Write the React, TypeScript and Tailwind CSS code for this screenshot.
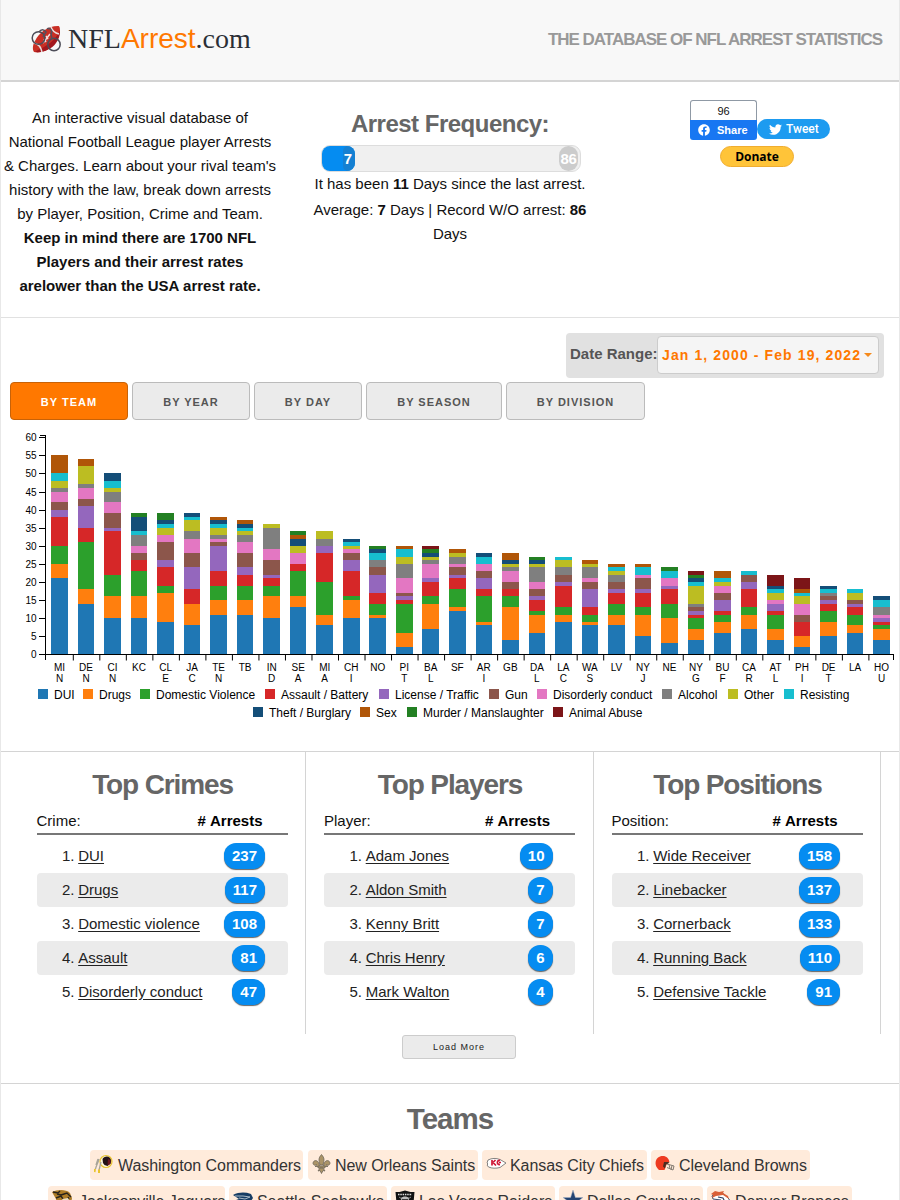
import React from "react";
import { FaFacebook, FaTwitter } from "react-icons/fa";

const COLORS: Record<string, string> = {
  D: "#1f77b4", R: "#ff7f0e", V: "#2ca02c", A: "#d62728", L: "#9467bd",
  G: "#8c564b", C: "#e377c2", H: "#7f7f7f", O: "#bcbd22", S: "#17becf",
  T: "#144e78", X: "#b05608", M: "#238023", N: "#7c1518",
};

// Each entry is a category code followed by the running total at its top edge.
const TEAMS: [string, string][] = [
  ["MI N", "D21 R25 V30 A38 L40 G42 C45 H46 O48 S50 X55"],
  ["DE N", "D14 R18 V31 A35 L41 G43 C46 H47 O52 X54"],
  ["CI N", "D10 R16 V22 A34 L35 G39 C42 H45 O46 S48 T50"],
  ["KC", "D10 R16 V23 A26 G28 C30 H33 S34 T38 M39"],
  ["CL E", "D9 R17 V19 A24 L26 G31 C33 O35 S36 T37 M39"],
  ["JA C", "D8 R14 A18 L24 G28 C32 H34 O37 S38 T39"],
  ["TE N", "D11 R15 V19 A23 L30 G31 C32 H33 O35 S36 T37 X38"],
  ["TB", "D11 R15 V19 A22 L24 G28 C31 H33 O34 S35 T36 X37"],
  ["IN D", "D10 R16 V19 A21 L22 G26 C29 H35 O36"],
  ["SE A", "D13 R16 V23 A25 C28 O30 T32 X33 M34"],
  ["MI A", "D8 R11 V20 A28 L30 H32 O34"],
  ["CH I", "D10 R15 V16 A23 L26 G28 C29 O30 S31 T32"],
  ["NO", "D10 R11 V14 A17 L22 G24 H26 S28 T29 M30"],
  ["PI T", "D2 R6 V14 A15 L16 G17 C21 H25 O27 S29 X30"],
  ["BA L", "D7 R14 V16 A20 L21 C25 H26 O27 T28 M29 N30"],
  ["SF", "D12 R13 V18 A21 L22 G24 C25 H27 O28 X29"],
  ["AR I", "D8 R9 V16 A18 L21 G23 C25 S27 T28"],
  ["GB", "D4 R13 V16 A18 G20 C23 H24 O25 T26 X28"],
  ["DA L", "D6 R11 V12 A15 L16 G18 C20 H24 O25 T26 M27"],
  ["LA C", "D9 R11 V13 A19 L20 G22 H24 O26 S27"],
  ["WA S", "D8 R9 V11 A13 L18 G20 C21 H24 O25 X26"],
  ["LV", "D8 R11 V14 A17 L18 G20 H22 O23 S24 X25"],
  ["NY J", "D5 R11 V13 A17 L18 G21 C22 S24 X25"],
  ["NE", "D3 R10 V14 A18 L19 C21 S23 M24"],
  ["NY G", "D4 R7 V10 A11 L12 G13 H14 O19 S20 T21 M22 N23"],
  ["BU F", "D6 R9 V11 A12 L15 G17 C19 O20 S21 X23"],
  ["CA R", "D7 R11 V13 A18 L20 G22 S23"],
  ["AT L", "D4 R7 V11 A12 L14 C15 O17 S18 T19 N22"],
  ["PH I", "D2 R5 A9 G11 C14 O16 S17 X18 N21"],
  ["DE T", "D5 R9 V12 A14 L15 G16 H17 S18 T19"],
  ["LA", "D6 R8 V11 A13 L14 G15 O17 S18"],
  ["HO U", "D4 R7 V8 A9 L10 C11 H13 S15 T16"],
];

const BASE = 229.3;
const UNIT = 3.617;
const STEP = 26.52;

function Chart() {
  return (
    <svg width="898" height="264" viewBox="1 0 898 264" className="block" fontFamily="'Liberation Sans', Arial, sans-serif" fontSize="10">
      {TEAMS.map(([name, data], i) => {
        let prev = 0;
        const x = 51.2 + STEP * i;
        const [a, b] = name.split(" ");
        return (
          <g key={i}>
            {data.split(" ").map((seg) => {
              const top = Number(seg.slice(1));
              const y1 = Math.round(BASE - top * UNIT);
              const y0 = Math.round(BASE - prev * UNIT);
              prev = top;
              return <rect key={seg} x={x} y={y1} width="16.6" height={y0 - y1} fill={COLORS[seg[0]]} shapeRendering="crispEdges" />;
            })}
            <text x={x + 8.3} y="246" textAnchor="middle">{a}</text>
            {b && <text x={x + 8.3} y="257" textAnchor="middle">{b}</text>}
          </g>
        );
      })}
      <path d="M39.500 10.500H45.500V229.500H893.500V235.500M45.500 229.500V235.500" transform="translate(0 -.5)" fill="none" stroke="#000" shapeRendering="crispEdges" />
      {Array.from({ length: 31 }, (_, i) => (
        <path key={i} d={`M${73.3 + STEP * i} 229.500v6`} stroke="#000" strokeWidth="1" />
      ))}
      {Array.from({ length: 13 }, (_, i) => {
        const y = Math.round(BASE - i * 5 * UNIT);
        return (
          <g key={i}>
            <path d={`M39 ${y + 0.5}h6`} stroke="#000" shapeRendering="crispEdges" />
            <text x="36.500" y={y + 4} textAnchor="end">{i * 5}</text>
          </g>
        );
      })}
    </svg>
  );
}

const LEGEND: [string, string, number][][] = [
  [["D", "DUI", 45], ["R", "Drugs", 57], ["V", "Domestic Violence", 125], ["A", "Assault / Battery", 114], ["L", "License / Traffic", 110], ["G", "Gun", 48], ["C", "Disorderly conduct", 125], ["H", "Alcohol", 66], ["O", "Other", 56], ["S", "Resisting", 66]],
  [["T", "Theft / Burglary", 107], ["X", "Sex", 47], ["M", "Murder / Manslaughter", 146], ["N", "Animal Abuse", 92]],
];

function Legend() {
  return (
    <div className="text-[12px] leading-[18px] text-black">
      {LEGEND.map((row, r) => (
        <div key={r} className={r ? "flex pl-[252px]" : "flex pl-[37px]"}>
          {row.map(([c, label, w]) => (
            <div key={label} className="flex h-[18px] shrink-0 items-center gap-[6px] whitespace-nowrap" style={{ width: w }}>
              <span className="h-[10px] w-[10px] shrink-0" style={{ background: COLORS[c] }} />
              <span className="pt-[2px] leading-[18px]">{label}</span>
            </div>
          ))}
        </div>
      ))}
    </div>
  );
}

const LISTS: { title: string; head: string; rows: [string, number][] }[] = [
  { title: "Top Crimes", head: "Crime:", rows: [["DUI", 237], ["Drugs", 117], ["Domestic violence", 108], ["Assault", 81], ["Disorderly conduct", 47]] },
  { title: "Top Players", head: "Player:", rows: [["Adam Jones", 10], ["Aldon Smith", 7], ["Kenny Britt", 7], ["Chris Henry", 6], ["Mark Walton", 4]] },
  { title: "Top Positions", head: "Position:", rows: [["Wide Receiver", 158], ["Linebacker", 137], ["Cornerback", 133], ["Running Back", 110], ["Defensive Tackle", 91]] },
];

function TopList({ title, head, rows }: (typeof LISTS)[number]) {
  return (
    <div className="h-[282px] flex-1 border-r border-[#d4d4d4] pr-[17.500px] pl-[18px]">
      <h2 className="pt-[15px] pl-px text-center text-[28px] leading-[36px] font-bold tracking-[-1.120px] text-[#666]">{title}</h2>
      <div className="mt-[7px] flex h-[25px] justify-between border-b-2 border-[#777] pr-[25px] leading-[22px]">
        <span>{head}</span>
        <b className="text-black">#&nbsp;Arrests</b>
      </div>
      <ol className="mt-[4px]">
        {rows.map(([name, n], i) => (
          <li key={name} className="flex h-[34px] items-center rounded-[4px] pr-[22.500px] pl-[25.500px] text-[#222] even:bg-[#ebebeb]">
            <span className="w-[16.200px]">{i + 1}.</span>
            <a className="flex-1 underline underline-offset-[2px]">{name}</a>
            <span className="h-[26px] rounded-[12px] bg-[#058cf1] px-[8px] leading-[25px] font-bold text-white shadow-[0_1px_1px_#666]">{n}</span>
          </li>
        ))}
      </ol>
    </div>
  );
}

function HandcuffBall() {
  return (
    <svg width="32" height="28" viewBox="0 0 32 28">
      <path d="M4 27c-2-3-1-8 1-11C9 8 17 1 28 1c2 0 2 2 2 7-2 7-7 13-13 17-4 2-9 3-13 2Z" fill="#c92f25" />
      <path d="M5 27c8 1 17-3 21-9 3-4 4-8 4-13-3 7-8 12-13 15-4 3-8 4-12 7Z" fill="#a3171d" />
      <path d="M4 18c4 1 7 4 8 9M21 2c1 3 4 6 8 7" fill="none" stroke="#e9dede" strokeWidth="1.500" />
      <path d="m13 18 7-9m-6 5 2 3m0-6 2 3" stroke="#f4dcdc" strokeWidth="1.500" />
      <circle cx="8.500" cy="13" r="6.300" fill="none" stroke="#4d4d58" strokeWidth="1.500" />
      <circle cx="24" cy="19.500" r="6.200" fill="none" stroke="#4d4d58" strokeWidth="1.500" />
      <path d="M9 7c2-3 5-3 7 0l-3 5m4-8c3-2 6 2 4 5l1 5" fill="none" stroke="#55505c" strokeWidth="1.500" />
    </svg>
  );
}

const LOGOS: Record<string, React.ReactNode> = {
  was: (
    <>
      <circle cx="12" cy="7.500" r="6" fill="#fff6df" stroke="#e9c42f" strokeWidth="1.200" />
      <path d="M8.500 5c1-2.500 5-3.500 7-1.500s2 4 1 6l-3 2.500-3-1-1.500-2Z" fill="#251215" />
      <path d="m14 5 2.500 1v4l-3 1.500Z" fill="#6d1620" />
      <path d="M5 5c-1 4-3 7-3.500 10M7 8c-1 3-1 5-2 8M4 5 2 11" fill="none" stroke="#a8a498" strokeWidth="1.300" />
      <path d="m1 15-.5 3M5 15.500V19" stroke="#e9c42f" strokeWidth="2" />
    </>
  ),
  no: (
    <g fill="#ab9467" stroke="#6f675a" strokeWidth=".8">
      <path d="M9.500.5c-3 3.500-3 5-1.500 10.500h3c1.500-5.500 1.500-7-1.500-10.500Z" />
      <path d="M7.500 12C7 6 2 5 1 9c0 2 2 3 3.500 1.500 0 1-.5 1.500-1.500 2h4.500ZM11.500 12c.5-6 5.500-7 6.500-3 0 2-2 3-3.500 1.500 0 1 .5 1.500 1.500 2h-4.500Z" />
      <path d="M6 12h7v2H6Z" />
      <path d="m8 14-2 3 2-.5 1.500 3 1.500-3 2 .5-2-3Z" />
    </g>
  ),
  kc: (
    <>
      <path d="m1 9 1-3c4-2 8-2 12-.5L20 9l-6 4.500c-4 1-8 1-11.500-.5L1 11l1-1Z" fill="#fff" stroke="#666" strokeWidth=".8" />
      <path d="M6 6v5.500m1-3 2.500-2.500m-2.500 2.500 3 3m4-5c-3-1-4 4.500 0 4m-1-2h2" fill="none" stroke="#cf1736" strokeWidth="1.700" />
    </>
  ),
  cle: (
    <>
      <path d="M3 15C-1 11 0 4 5 2.500s9 1 9.500 6L12 9l-1 3-1.500 4H4Z" fill="#ee3a20" />
      <path d="M9 8h5l-1 2-2 .5-1 4-2-2Z" fill="#4b2d22" />
      <path d="m12 10 7 2-1 4-6-2.500m2-3 1 4m2-3-1 4.500" fill="none" stroke="#817970" strokeWidth="1" />
    </>
  ),
  jac: (
    <>
      <path d="M0 2C5-.5 14-1 18 3l2 5-1 6-7 3-7-3-1-5Z" fill="#ad7c27" />
      <path d="m1 2 5 1 2-2m1 4 6-2 4 4M4 8l5-2 2 3m5-2 1 2M5 4l4 1" fill="none" stroke="#28231c" strokeWidth="1.400" />
      <path d="m10 9 6-1 2 4-6 1Z" fill="#e9dfc6" />
    </>
  ),
  sea: (
    <>
      <path d="M0 5c6-3 12-3 18-1l2 4-2 3-6-1-8 3-1-3 3-1Z" fill="#173c63" />
      <path d="M2 6h8l7 1-5 2-6-1" fill="none" stroke="#a9b9c6" strokeWidth="1" />
    </>
  ),
  lv: (
    <>
      <path d="M.5 2h4L10 .5 15.500 2h4l-1 11-8.500 6L1.500 13Z" fill="#111" />
      <path d="M3 4.500h14" stroke="#ddd" strokeWidth="1.500" strokeDasharray="1.500 .8" />
      <path d="M6 8c2-2 6-2 8 0l-.5 5-3.500 3-3.500-3Z" fill="#bcbcbc" />
      <path d="m2 16 14-9m2 9L4 7" stroke="#aaa" strokeWidth=".8" />
      <path d="M7 10h6" stroke="#111" strokeWidth="1.500" />
    </>
  ),
  dal: <path d="m10 0 2.400 7.500H20l-6 4.500 2.300 7.500L10 15l-6.300 4.500L6 12 0 7.500h7.600Z" fill="#234372" stroke="#a8b5c7" strokeWidth=".5" />,
  den: (
    <>
      <path d="m1 6 4-3 8 1 5 5 1 4-5 1-4-4-8-1Z" fill="#fff" stroke="#263d63" strokeWidth=".9" />
      <path d="m0 4 4-3 4 1 5-1-1 2 5 3 1 3-6-4-7 1-4 2 1-3Z" fill="#d96038" />
      <path d="m7 7 5 1 2 4" fill="none" stroke="#263d63" strokeWidth="1.100" />
    </>
  ),
};

const CHIPS: [string, string, number, number][][] = [
  [["was", "Washington Commanders", 213, 28], ["no", "New Orleans Saints", 170, 27], ["kc", "Kansas City Chiefs", 165, 28], ["cle", "Cleveland Browns", 159, 28]],
  [["jac", "Jacksonville Jaguars", 177, 31], ["sea", "Seattle Seahawks", 158, 28], ["lv", "Las Vegas Raiders", 164, 28], ["dal", "Dallas Cowboys", 144, 28], ["den", "Denver Broncos", 145, 28]],
];

export default function App() {
  const tab = "h-[38px] rounded-[4px] border border-[#bbb] bg-[#ebebeb] text-center text-[11px] leading-[38px] font-bold tracking-[1px] text-[#555]";
  return (
    <div className="h-[1200px] w-[900px] overflow-hidden border-x border-[#e8e8e8] bg-white font-['Liberation_Sans',Arial,sans-serif] text-[15px] text-[#111]">
      <header className="flex h-[82px] items-center justify-between border-b-2 border-[#d4d4d4] bg-[#f8f8f8] pr-[17px] pb-[2px] pl-[29px]">
        <div className="flex items-center">
          <HandcuffBall />
          <span className="ml-[6px] font-['Liberation_Serif',serif] text-[28px] leading-[40px] text-[#2b2f36]">NFL<span className="font-['Liberation_Sans',Arial,sans-serif] text-[#ff7800]">Arrest</span>.com</span>
        </div>
        <span className="pt-[2px] text-[17px] font-bold tracking-[-1.020px] whitespace-nowrap text-[#999]">THE DATABASE OF NFL ARREST STATISTICS</span>
      </header>

      <section className="flex h-[236px] border-b border-[#e1e1e1]">
        <p className="w-[278px] pt-[24px] text-center leading-[24px] whitespace-nowrap">
          An interactive visual database of<br />National Football League player Arrests<br />&amp; Charges. Learn about your rival team's<br />history with the law, break down arrests<br />by Player, Position, Crime and Team.
          <b className="block">Keep in mind there are 1700 NFL<br />Players and their arrest rates<br />arelower than the USA arrest rate.</b>
        </p>
        <div className="ml-[32px] w-[278px] pt-[26px] text-center">
          <h4 className="text-[24px] leading-[32px] font-bold tracking-[-0.500px] text-[#666]">Arrest Frequency:</h4>
          <div className="mt-[5px] ml-[10px] flex h-[27px] w-[260px] justify-between rounded-[9px] border border-[#ddd] bg-[#f0f0f0] font-bold text-white">
            <div className="flex h-[25px] w-[33px] justify-end overflow-hidden rounded-[8px] bg-[#058cf1]">
              <span className="w-[12px] rounded-l-[5px] bg-[#1580d2] pr-[3px] text-right leading-[26px]">7</span>
            </div>
            <span className="mr-[2px] flex w-[19px] justify-center rounded-[10px] bg-[#ccc] leading-[26px] tracking-[-0.300px]">86</span>
          </div>
          <p className="leading-[24px]">It has been <b>11</b> Days since the last arrest.</p>
          <p className="mt-[2px] leading-[24px]">Average: <b>7</b> Days | Record W/O arrest: <b>86</b><br />Days</p>
        </div>
        <div className="ml-[101px] pt-[18px]">
          <div className="flex items-end">
            <div className="w-[67px] text-center">
              <div className="h-[20px] rounded-t-[3px] border border-b-0 border-[#8f99a5] text-[11px] leading-[21px]">96</div>
              <div className="flex h-[20px] items-center rounded-b-[3px] bg-[#1877f2] pl-[8px] text-[11px] font-bold text-white"><FaFacebook size={12} /><span className="ml-[7px]">Share</span></div>
            </div>
            <div className="mb-px flex h-[20px] w-[73px] items-center rounded-full bg-[#1d9bf0] pl-[12px] font-[Roboto,sans-serif] text-[12px] font-medium text-white"><FaTwitter size={13} /><span className="ml-[4px]">Tweet</span></div>
          </div>
          <div className="mt-[6px] ml-[30px] h-[21px] w-[74px] rounded-full border border-[#f0ad30] bg-[#ffc439] text-center font-['Open_Sans',sans-serif] text-[12px] leading-[19px] font-bold text-black">Donate</div>
        </div>
      </section>

      <section className="h-[434px] border-b border-[#d4d4d4]">
        <div className="flex justify-end pt-[15px] pr-[15px]">
          <div className="flex h-[45px] w-[318px] rounded-[4px] bg-[#e1e1e1] pt-[3px] pl-[4px] font-bold whitespace-nowrap text-[#555]">
            <span className="w-[87px] pt-[9px] leading-[18px]">Date Range:</span>
            <span className="flex h-[38px] w-[222px] items-center rounded-[4px] border border-[#ccc] bg-[#f5f5f5] pl-[4px] text-[14px] tracking-[1.100px] text-[#ff7800]">Jan 1, 2000 - Feb 19, 2022<i className="ml-[3px] border-x-4 border-t-4 border-x-transparent border-t-[#f58a1c]" /></span>
          </div>
        </div>
        <div className="mt-[4px] flex gap-[4px] pl-[9px]">
          <button className="h-[38px] w-[118px] rounded-[4px] border border-[#c76208] bg-[#ff7800] text-center text-[11px] leading-[38px] font-bold tracking-[1px] text-white">BY TEAM</button>
          <button className={`${tab} w-[118px]`}>BY YEAR</button>
          <button className={`${tab} w-[108px]`}>BY DAY</button>
          <button className={`${tab} w-[136px]`}>BY SEASON</button>
          <button className={`${tab} w-[139px]`}>BY DIVISION</button>
        </div>
        <div className="mt-[5px]"><Chart /></div>
        <div className="-mt-[4px]"><Legend /></div>
      </section>

      <section className="h-[332px] border-b border-[#d4d4d4]">
        <div className="ml-[17.500px] flex w-[862.500px]">
          {LISTS.map((l) => <TopList key={l.title} {...l} />)}
        </div>
        <button className="mt-px ml-[401px] block h-[24px] w-[114px] rounded-[3px] border border-[#ccc] bg-[#ebebeb] pt-[2px] text-[9px] tracking-[1px] text-[#222]">Load More</button>
      </section>

      <section>
        <h2 className="pt-[16px] text-center text-[29.500px] leading-[38px] font-bold tracking-[-1px] text-[#666]">Teams</h2>
        <div className="mt-[12px] flex flex-col items-center gap-[6px] text-[16px] tracking-[-0.070px] text-[#333]">
          {CHIPS.map((row, r) => (
            <div key={r} className="flex gap-[4px]">
              {row.map(([id, name, w, off], i) => (
                <a key={id} className={r === 0 && i === 0 ? "mr-px flex h-[30px] items-center rounded-[4px] bg-[#ffebdb] whitespace-nowrap" : "flex h-[30px] items-center rounded-[4px] bg-[#ffebdb] whitespace-nowrap"} style={{ width: w }}>
                  <span className="flex shrink-0 justify-start pb-[2px] pl-[4px]" style={{ width: off }}><svg width="20" height="20" viewBox="0 0 20 20">{LOGOS[id]}</svg></span>
                  <span className="pt-px">{name}</span>
                </a>
              ))}
            </div>
          ))}
        </div>
      </section>
    </div>
  );
}
